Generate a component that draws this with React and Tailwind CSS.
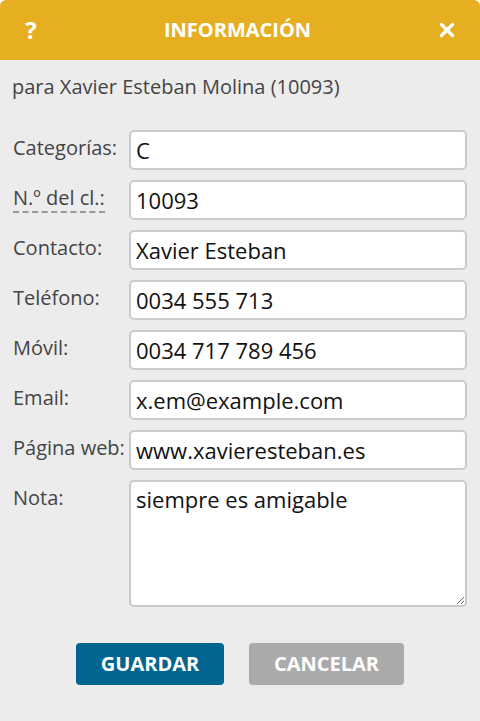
import { X } from 'lucide-react'

const FIELDS = [
  { label: 'Categorías:', value: 'C' },
  { label: 'N.º del cl.:', value: '10093', abbr: true },
  { label: 'Contacto:', value: 'Xavier Esteban' },
  { label: 'Teléfono:', value: '0034 555 713' },
  { label: 'Móvil:', value: '0034 717 789 456' },
  { label: 'Email:', value: 'x.em@example.com' },
  { label: 'Página web:', value: 'www.xavieresteban.es' },
]

export default function App() {
  return (
    <div className="w-[480px] h-[721px] bg-white font-['Open_Sans',sans-serif]">
      <div className="h-full bg-[#ececec] rounded-t-md overflow-hidden flex flex-col">
        <div className="h-[60px] shrink-0 bg-[#e6af22] flex items-center justify-between pl-[23px] pr-[22px] text-white">
          <span className="text-[24px] leading-none font-bold w-[16px] text-center">?</span>
          <h1 className="text-[20px] leading-none font-bold">INFORMACIÓN</h1>
          <X size={22} strokeWidth={3.5} />
        </div>

        <p className="px-[12px] pt-[13px] text-[20px] leading-[28px] text-[#444]">para Xavier Esteban Molina (10093)</p>

        <form className="mt-[29px] pl-[13px] pr-[13px] flex flex-col gap-[10px]">
          {FIELDS.map(f => (
            <div key={f.label} className="flex">
              <label className="w-[116px] shrink-0 pt-[4px] text-[20px] leading-[28px] text-[#444] whitespace-nowrap">
                {f.abbr
                  ? <span className="border-b-2 border-dashed border-[#999]">{f.label}</span>
                  : f.label}
              </label>
              <input
                readOnly
                value={f.value}
                className="flex-1 min-w-0 h-[40px] bg-white border-2 border-[#cbcbcb] rounded-[5px] px-[5px] text-[22px] text-[#111] outline-none"
              />
            </div>
          ))}
          <div className="flex">
            <label className="w-[116px] shrink-0 pt-[4px] text-[20px] leading-[28px] text-[#444]">Nota:</label>
            <textarea
              readOnly
              value="siempre es amigable"
              className="flex-1 min-w-0 h-[127px] bg-white border-2 border-[#cbcbcb] rounded-[5px] px-[5px] py-[2px] text-[22px] leading-[30px] text-[#111] outline-none resize-y"
            />
          </div>
        </form>

        <div className="mt-[36px] flex justify-center gap-[25px]">
          <button className="w-[148px] h-[42px] rounded-[4px] bg-[#006590] text-white text-[20px] font-bold">GUARDAR</button>
          <button className="w-[155px] h-[42px] rounded-[4px] bg-[#aaaaaa] text-white text-[20px] font-bold">CANCELAR</button>
        </div>
      </div>
    </div>
  )
}
